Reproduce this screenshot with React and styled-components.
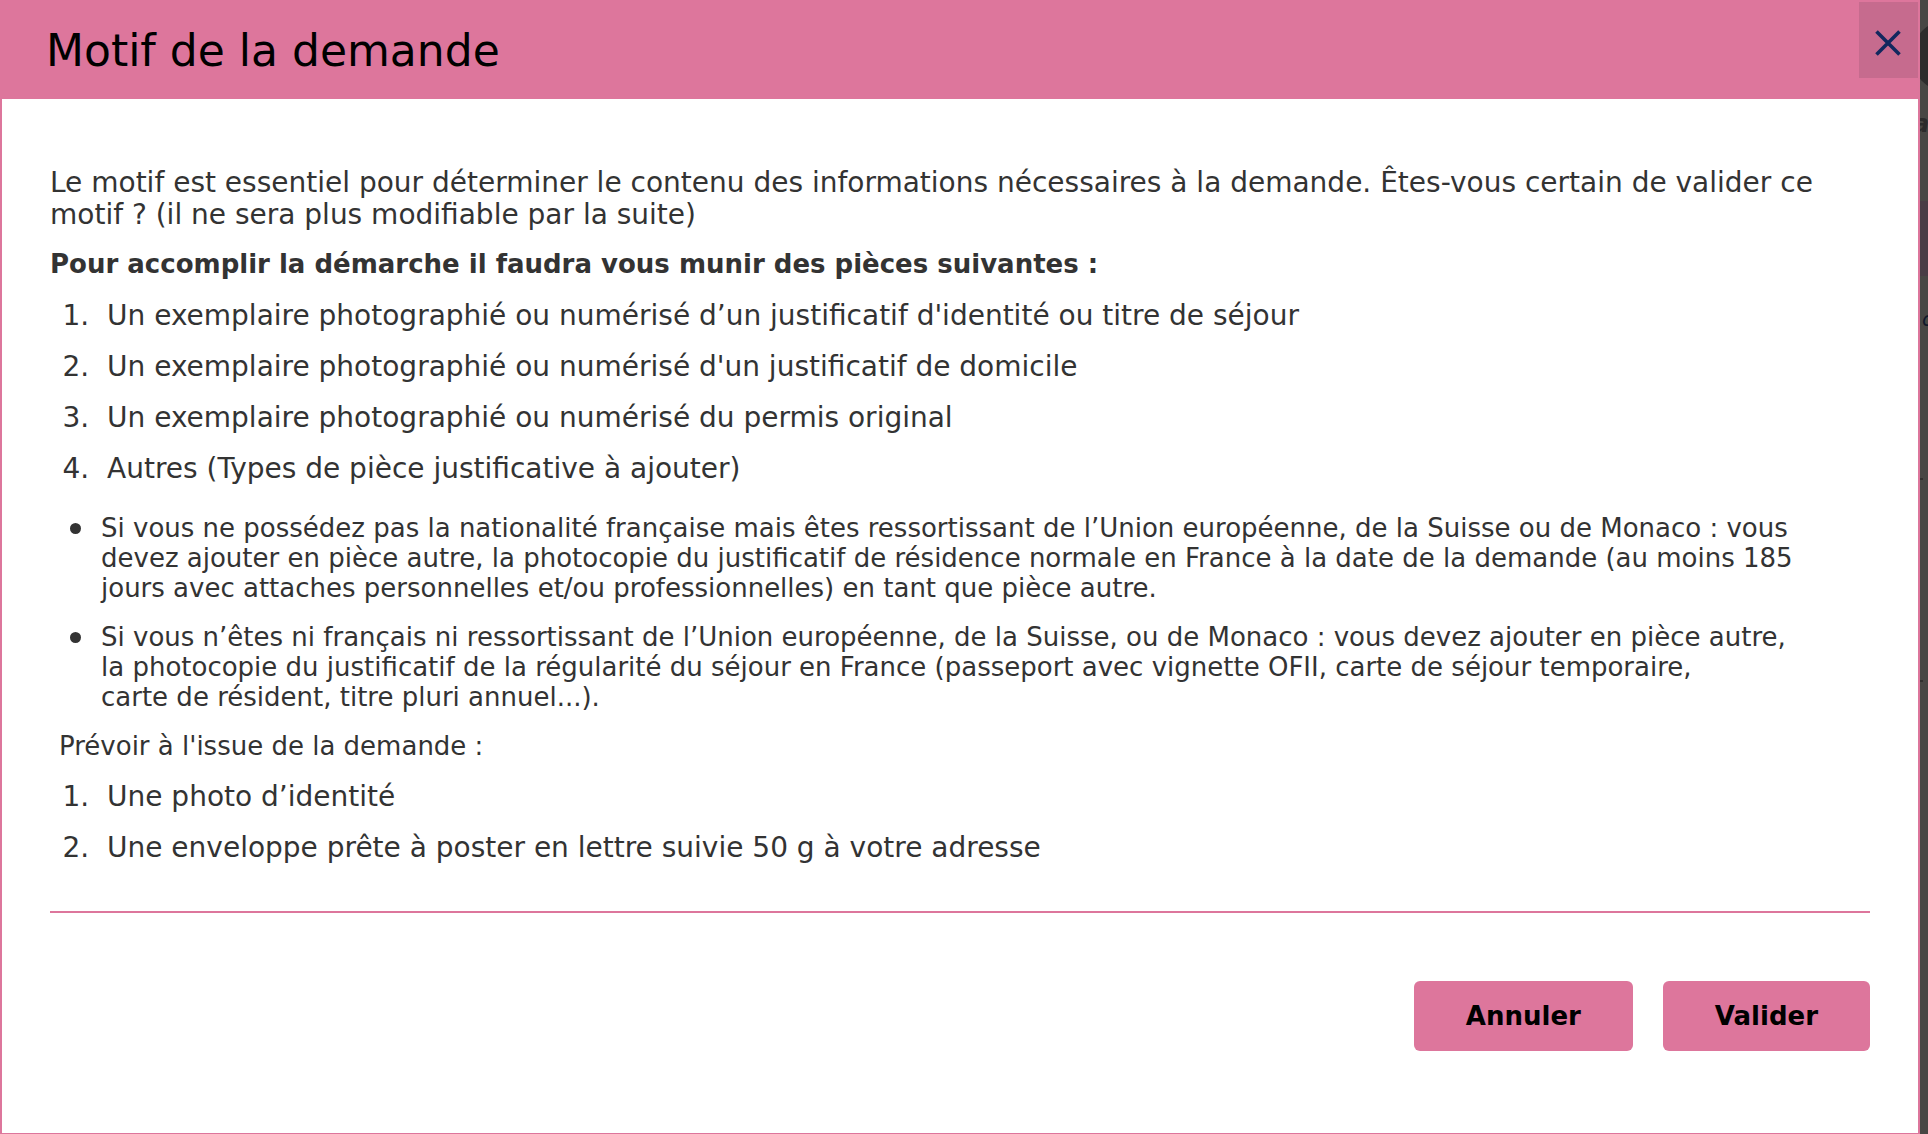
import React from "react";
import styled, { createGlobalStyle } from "styled-components";

const pink = "#dd769c";

const Global = createGlobalStyle`
  * { box-sizing: border-box; }
  body { margin: 0; background: #474744; font-family: Verdana, "DejaVu Sans", sans-serif; color: #333; }
`;

const Screen = styled.div`
  display: grid;
  grid-template-columns: minmax(0, 1fr) 8px;
  min-height: 100vh;
`;

const Dialog = styled.section`
  display: flex;
  flex-direction: column;
  border: 2px solid ${pink};
  border-bottom-width: 1px;
  background: #fff;
`;

const Header = styled.header`
  display: flex;
  justify-content: space-between;
  align-items: flex-start;
  height: 97px;
  background: ${pink};
  padding-left: 44px;
`;

const Title = styled.h1`
  margin: 0;
  font-size: 44px;
  line-height: 98px;
  font-weight: 400;
  color: #000;
`;

const CloseButton = styled.button`
  display: flex;
  align-items: center;
  justify-content: center;
  width: 59px;
  height: 76px;
  padding: 6px 2px 0 0;
  border: 0;
  background: #c66b8e;
  color: #12285e;
`;

const Body = styled.div`
  padding: 68px 48px 0;
`;

const Text = styled.p`
  margin: 0 0 17px;
  font-size: 28px;
  line-height: 32px;
`;

const Lead = styled.p`
  margin: 0 0 19px;
  font-size: 26px;
  line-height: 32px;
  font-weight: 700;
`;

const Note = styled.p`
  margin: 0 0 19px;
  padding-left: 9px;
  font-size: 26px;
  line-height: 30px;
`;

const Steps = styled.ol`
  margin: 0;
  padding-left: 57px;
  font-size: 28px;
  line-height: 33px;
  li { margin-bottom: 18px; }
  li::marker { content: counter(list-item) ".\\00a0\\00a0"; }
`;

const Cases = styled.ul`
  margin: 28px 0 0;
  padding: 0 70px 0 20px;
  list-style: none;
  font-size: 26px;
  line-height: 30px;
  li {
    display: grid;
    grid-template-columns: 31px minmax(0, 1fr);
    margin-bottom: 19px;
  }
  li::before {
    content: "";
    width: 11px;
    height: 11px;
    margin-top: 10px;
    border-radius: 50%;
    background: #333;
  }
`;

const Footer = styled.footer`
  display: flex;
  justify-content: flex-end;
  gap: 30px;
  margin: 29px 48px 0;
  padding-top: 68px;
  border-top: 2px solid ${pink};
`;

const Action = styled.button`
  height: 70px;
  padding: 0 52px;
  border: 0;
  border-radius: 6px;
  background: ${pink};
  color: #000;
  font: 700 26px/32px Verdana, "DejaVu Sans", sans-serif;
`;

const Backdrop = styled.div`
  display: flex;
  flex-direction: column;
  align-items: flex-start;
  overflow: hidden;
  background: #474744;
`;

const Avatar = styled.div`
  flex: none;
  width: 72px;
  height: 72px;
  margin: 20px 0 0 -8px;
  border-radius: 50%;
  background: #2c2c2c;
`;

const Band = styled.div`
  flex: none;
  width: 100%;
  height: 75px;
  margin-top: 63px;
  background: #483d45;
`;

const Caption = styled.span`
  height: 28px;
  margin: 18px 0 0 -7px;
  color: #2b2b2b;
  font: italic 700 24px/28px Verdana, "DejaVu Sans", sans-serif;
`;

const Entry = styled.span`
  height: 30px;
  margin: 28px 0 0 2px;
  color: #10182a;
  font: italic 20px/30px Verdana, "DejaVu Sans", sans-serif;
`;

const Tick = styled.div`
  flex: none;
  width: 3px;
  height: 2px;
  margin-top: ${(p) => p.$gap}px;
  background: #30302e;
`;

export default function App() {
  return (
    <>
      <Global />
      <Screen>
        <Dialog role="dialog" aria-labelledby="dialog-title">
          <Header>
            <Title id="dialog-title">Motif de la demande</Title>
            <CloseButton type="button" aria-label="Fermer">
              <svg width="26" height="26" viewBox="0 0 26 26" fill="none" stroke="currentColor" strokeWidth="3.6">
                <path d="M1.5 1.5 24.5 24.5M24.5 1.5 1.5 24.5" />
              </svg>
            </CloseButton>
          </Header>
          <Body>
            <Text>
              Le motif est essentiel pour déterminer le contenu des informations nécessaires à la demande. Êtes-vous certain de valider ce motif ? (il ne sera plus modifiable par la suite)
            </Text>
            <Lead>Pour accomplir la démarche il faudra vous munir des pièces suivantes :</Lead>
            <Steps>
              <li>Un exemplaire photographié ou numérisé d’un justificatif d'identité ou titre de séjour</li>
              <li>Un exemplaire photographié ou numérisé d'un justificatif de domicile</li>
              <li>Un exemplaire photographié ou numérisé du permis original</li>
              <li>Autres (Types de pièce justificative à ajouter)</li>
            </Steps>
            <Cases>
              <li>Si vous ne possédez pas la nationalité française mais êtes ressortissant de l’Union européenne, de la Suisse ou de Monaco : vous devez ajouter en pièce autre, la photocopie du justificatif de résidence normale en France à la date de la demande (au moins 185 jours avec attaches personnelles et/ou professionnelles) en tant que pièce autre.</li>
              <li>Si vous n’êtes ni français ni ressortissant de l’Union européenne, de la Suisse, ou de Monaco : vous devez ajouter en pièce autre, la photocopie du justificatif de la régularité du séjour en France (passeport avec vignette OFII, carte de séjour temporaire, carte&nbsp;de&nbsp;résident, titre pluri annuel...).</li>
            </Cases>
            <Note>Prévoir à l'issue de la demande :</Note>
            <Steps>
              <li>Une photo d’identité</li>
              <li>Une enveloppe prête à poster en lettre suivie 50 g à votre adresse</li>
            </Steps>
          </Body>
          <Footer>
            <Action type="button">Annuler</Action>
            <Action type="button">Valider</Action>
          </Footer>
        </Dialog>
        <Backdrop aria-hidden="true">
          <Avatar />
          <Caption>a</Caption>
          <Band />
          <Entry>o</Entry>
          <Tick $gap={144} />
          <Tick $gap={200} />
        </Backdrop>
      </Screen>
    </>
  );
}
